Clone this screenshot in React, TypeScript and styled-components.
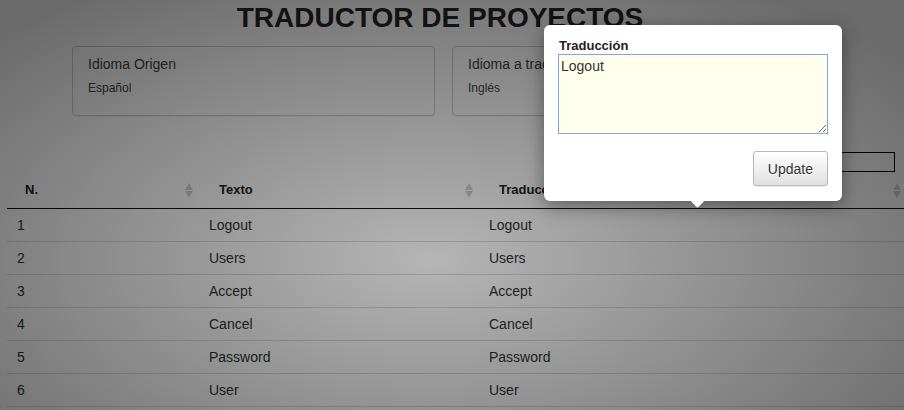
import React from "react";
import styled, { createGlobalStyle } from "styled-components";

const rows = [
  { n: 1, texto: "Logout", traduccion: "Logout" },
  { n: 2, texto: "Users", traduccion: "Users" },
  { n: 3, texto: "Accept", traduccion: "Accept" },
  { n: 4, texto: "Cancel", traduccion: "Cancel" },
  { n: 5, texto: "Password", traduccion: "Password" },
  { n: 6, texto: "User", traduccion: "User" },
];

const SortIcon = () => (
  <svg width="8" height="15" viewBox="0 0 8 15">
    <polygon points="0,7 4,0 8,7" fill="#d2d2d2" />
    <polygon points="0,8 8,8 4,15" fill="#d2d2d2" />
  </svg>
);

export default function App() {
  return (
    <>
      <GlobalStyle />
      <Page>
        <Title>TRADUCTOR DE PROYECTOS</Title>
        <CardsRow>
          <Card>
            <CardTitle>Idioma Origen</CardTitle>
            <CardValue>Español</CardValue>
          </Card>
          <Card>
            <CardTitle>Idioma a traducir</CardTitle>
            <CardValue>Inglés</CardValue>
          </Card>
        </CardsRow>
        <FilterRow>
          <FilterLabel>Buscar:</FilterLabel>
          <FilterInput type="search" />
        </FilterRow>
        <Table>
          <colgroup>
            <col style={{ width: 192 }} />
            <col style={{ width: 280 }} />
            <col style={{ width: 428 }} />
          </colgroup>
          <thead>
            <tr>
              {["N.", "Texto", "Traducción"].map((h, i) => (
                <Th key={h} $first={i === 0}>
                  <HeadInner>
                    <span>{h}</span>
                    <SortIcon />
                  </HeadInner>
                </Th>
              ))}
            </tr>
          </thead>
          <tbody>
            {rows.map((r) => (
              <tr key={r.n}>
                <Td>{r.n}</Td>
                <Td>{r.texto}</Td>
                <Td>{r.traduccion}</Td>
              </tr>
            ))}
          </tbody>
        </Table>

        <Overlay />

        <Popover>
          <PopLabel>Traducción</PopLabel>
          <TextArea
            defaultValue="Logout"
            spellCheck
            autoFocus
            onFocus={(e) => {
              const len = e.currentTarget.value.length;
              e.currentTarget.setSelectionRange(len, len);
            }}
          />
          <ButtonRow>
            <UpdateButton>Update</UpdateButton>
          </ButtonRow>
        </Popover>
      </Page>
    </>
  );
}

const GlobalStyle = createGlobalStyle`
  html, body {
    margin: 0;
    padding: 0;
    overflow: hidden;
    background: #fff;
    font-family: "Liberation Sans", Arial, sans-serif;
    color: #333;
  }
`;

const Page = styled.div`
  position: relative;
  width: 904px;
  height: 410px;
  overflow: hidden;
`;

const Title = styled.h1`
  width: 880px;
  margin: 0;
  padding-top: 2px;
  font-size: 28px;
  line-height: 32px;
  font-weight: bold;
  text-align: center;
  color: #262626;
`;

const CardsRow = styled.div`
  display: flex;
  gap: 17px;
  margin-top: 12px;
  padding-left: 72px;
`;

const Card = styled.div`
  width: 363px;
  height: 70px;
  box-sizing: border-box;
  border: 1px solid #cfcfcf;
  border-radius: 4px;
  padding: 7px 15px;
  background: #fff;
  box-shadow: 0 1px 1px rgba(0, 0, 0, 0.05);
`;

const CardTitle = styled.div`
  font-size: 14px;
  line-height: 20px;
  color: #444;
`;

const CardValue = styled.div`
  margin-top: 6px;
  font-size: 12px;
  line-height: 17px;
  color: #444;
`;

const FilterRow = styled.div`
  display: flex;
  justify-content: flex-end;
  align-items: center;
  gap: 6px;
  margin-top: 36px;
  padding-right: 9px;
  height: 20px;
`;

const FilterLabel = styled.label`
  font-size: 14px;
  color: #333;
`;

const FilterInput = styled.input`
  width: 200px;
  height: 20px;
  box-sizing: border-box;
  border: 1px solid #000;
  padding: 0 4px;
  margin: 0;
  background: #fff;
  outline: none;
`;

const Table = styled.table`
  margin-left: 7px;
  width: 900px;
  table-layout: fixed;
  border-collapse: collapse;
`;

const Th = styled.th<{ $first?: boolean }>`
  padding: 10px 6px 10px ${(p) => (p.$first ? 18 : 20)}px;
  font-size: 13px;
  line-height: 16px;
  font-weight: bold;
  text-align: left;
  color: #222;
  border-bottom: 1px solid #111;
`;

const HeadInner = styled.div`
  display: flex;
  justify-content: space-between;
  align-items: center;
  height: 16px;
`;

const Td = styled.td`
  padding: 8px 10px;
  font-size: 14px;
  line-height: 16px;
  color: #333;
  border-bottom: 1px solid #dcdcdc;
`;

const Overlay = styled.div`
  position: absolute;
  inset: 0;
  background: radial-gradient(
    ellipse 600px 320px at 430px 260px,
    rgba(0, 0, 0, 0.29) 0%,
    rgba(0, 0, 0, 0.58) 100%
  );
`;

const Popover = styled.div`
  position: absolute;
  left: 544px;
  top: 25px;
  width: 298px;
  height: 176px;
  box-sizing: border-box;
  padding: 13px 14px 14px;
  background: #fff;
  border-radius: 6px;
  box-shadow: 0 5px 18px rgba(0, 0, 0, 0.4);

  &::after {
    content: "";
    position: absolute;
    left: 149px;
    bottom: -5px;
    width: 9px;
    height: 9px;
    background: #fff;
    transform: rotate(45deg);
  }
`;

const PopLabel = styled.div`
  font-size: 13px;
  line-height: 16px;
  font-weight: bold;
  color: #222;
  padding-left: 1px;
`;

const TextArea = styled.textarea`
  display: block;
  width: 270px;
  height: 80px;
  box-sizing: border-box;
  margin: 0;
  padding: 3px 2px;
  border: 1px solid #7ea6e2;
  border-radius: 0;
  background: #ffffee;
  font-family: "Liberation Sans", Arial, sans-serif;
  font-size: 14px;
  line-height: 16px;
  color: #333;
  caret-color: #000;
  outline: none;
  resize: both;
`;

const ButtonRow = styled.div`
  display: flex;
  justify-content: flex-end;
  margin-top: 17px;
`;

const UpdateButton = styled.button`
  height: 35px;
  padding: 0 14px;
  font-family: "Liberation Sans", Arial, sans-serif;
  font-size: 14px;
  color: #333;
  background: linear-gradient(to bottom, #ffffff 0%, #e0e0e0 100%);
  border: 1px solid #b8b8b8;
  border-radius: 3px;
  box-shadow: 0 1px 1px rgba(0, 0, 0, 0.08);
  text-shadow: 0 1px 0 #fff;
  cursor: pointer;
`;
